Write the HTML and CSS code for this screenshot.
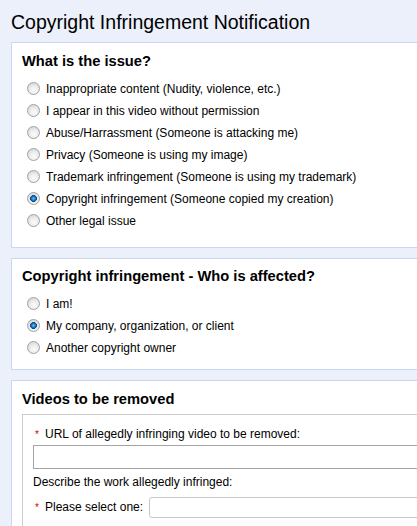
FILE: index.html
```html
<!DOCTYPE html>
<html lang="en">
<head>
<meta charset="utf-8">
<title>Copyright Infringement Notification</title>
<link rel="stylesheet" href="styles.css">
</head>
<body>
<div class="page">
  <h1 class="page-title">Copyright Infringement Notification</h1>

  <section class="card card-issue">
    <h2 class="card-title">What is the issue?</h2>
    <ul class="options">
      <li class="option"><input type="radio" class="radio" name="issue" id="i1"><label for="i1">Inappropriate content (Nudity, violence, etc.)</label></li>
      <li class="option"><input type="radio" class="radio" name="issue" id="i2"><label for="i2">I appear in this video without permission</label></li>
      <li class="option"><input type="radio" class="radio" name="issue" id="i3"><label for="i3">Abuse/Harrassment (Someone is attacking me)</label></li>
      <li class="option"><input type="radio" class="radio" name="issue" id="i4"><label for="i4">Privacy (Someone is using my image)</label></li>
      <li class="option"><input type="radio" class="radio" name="issue" id="i5"><label for="i5">Trademark infringement (Someone is using my trademark)</label></li>
      <li class="option"><input type="radio" class="radio" name="issue" id="i6" checked><label for="i6">Copyright infringement (Someone copied my creation)</label></li>
      <li class="option"><input type="radio" class="radio" name="issue" id="i7"><label for="i7">Other legal issue</label></li>
    </ul>
  </section>

  <section class="card card-affected">
    <h2 class="card-title">Copyright infringement - Who is affected?</h2>
    <ul class="options">
      <li class="option"><input type="radio" class="radio" name="who" id="w1"><label for="w1">I am!</label></li>
      <li class="option"><input type="radio" class="radio" name="who" id="w2" checked><label for="w2">My company, organization, or client</label></li>
      <li class="option"><input type="radio" class="radio" name="who" id="w3"><label for="w3">Another copyright owner</label></li>
    </ul>
  </section>

  <section class="card card-videos">
    <h2 class="card-title">Videos to be removed</h2>
    <div class="video-box">
      <label class="field-label" for="url"><span class="star">*</span>URL of allegedly infringing video to be removed:</label>
      <input type="text" class="text-input" id="url">
      <p class="field-note">Describe the work allegedly infringed:</p>
      <div class="select-row">
        <label class="field-label field-label-inline" for="kind"><span class="star">*</span>Please select one:</label>
        <select class="select" id="kind"></select>
      </div>
    </div>
  </section>
</div>
</body>
</html>
```

FILE: styles.css
```css
html, body {
  margin: 0;
  padding: 0;
  overflow: hidden;
}

body {
  background: #ecf0fa;
  font-family: "Liberation Sans", Arial, sans-serif;
  color: #000;
}

.page {
  height: 526px;
  overflow: hidden;
  padding-left: 11px;
}

.page-title {
  margin: 0;
  padding-top: 10px;
  font-size: 19.5px;
  line-height: 24px;
  font-weight: normal;
  margin-bottom: 8px;
}

.card {
  background: #fff;
  border: 1px solid #c9d7f1;
  margin-right: -60px;
  margin-bottom: 10px;
  padding: 9px 10px 15px 10px;
}

.card-affected {
  padding-top: 8px;
  padding-bottom: 10px;
}

.card-title {
  margin: 0 0 8px 0;
  font-size: 14.7px;
  line-height: 18px;
  font-weight: bold;
}

.options {
  list-style: none;
  margin: 0;
  padding: 0 0 0 5px;
}

.option {
  display: flex;
  align-items: center;
  height: 22px;
  font-size: 12px;
  line-height: 22px;
  gap: 6px;
}

.radio {
  appearance: none;
  -webkit-appearance: none;
  margin: 0;
  width: 13px;
  height: 13px;
  border-radius: 50%;
  border: 1px solid #a2a2a2;
  background: radial-gradient(circle at 55% 65%, #fbfbfb 0, #eeeeee 40%, #cdcdcd 100%);
  flex: none;
  position: relative;
  top: -1px;
}

.radio:checked {
  background:
    radial-gradient(circle at 50% 50%, #6cc4f6 0, #1f86cf 1.6px, #0d4f8f 3px, #0d4f8f 3.2px, rgba(255,255,255,0) 3.7px),
    radial-gradient(circle at 55% 65%, #fbfbfb 0, #eeeeee 40%, #cdcdcd 100%);
}

.card-videos {
  padding-bottom: 40px;
}

.card-videos .card-title {
  margin-bottom: 6px;
}

.video-box {
  border: 1px solid #cccccc;
  padding: 11px 10px 30px 10px;
  font-size: 12px;
  line-height: 16px;
}

.field-label {
  display: block;
  padding-left: 2px;
  white-space: nowrap;
}

.field-label-inline {
  display: inline-block;
  flex: none;
}

.star {
  color: #e00000;
  font-size: 10px;
  display: inline-block;
  width: 10px;
}

.text-input {
  display: block;
  box-sizing: border-box;
  width: 520px;
  height: 24px;
  margin: 2px 0 0 0;
  border: 1px solid #a5a5a5;
  background: #fff;
  padding: 0;
}

.field-note {
  margin: 5px 0 0 0;
}

.select-row {
  display: flex;
  align-items: center;
  gap: 6px;
  margin-top: 7px;
  height: 21px;
}

.select {
  appearance: none;
  -webkit-appearance: none;
  box-sizing: border-box;
  width: 400px;
  height: 21px;
  border: 1px solid #c8c8c8;
  border-radius: 3px;
  background: #fff;
  margin: 0;
  flex: none;
}
```
